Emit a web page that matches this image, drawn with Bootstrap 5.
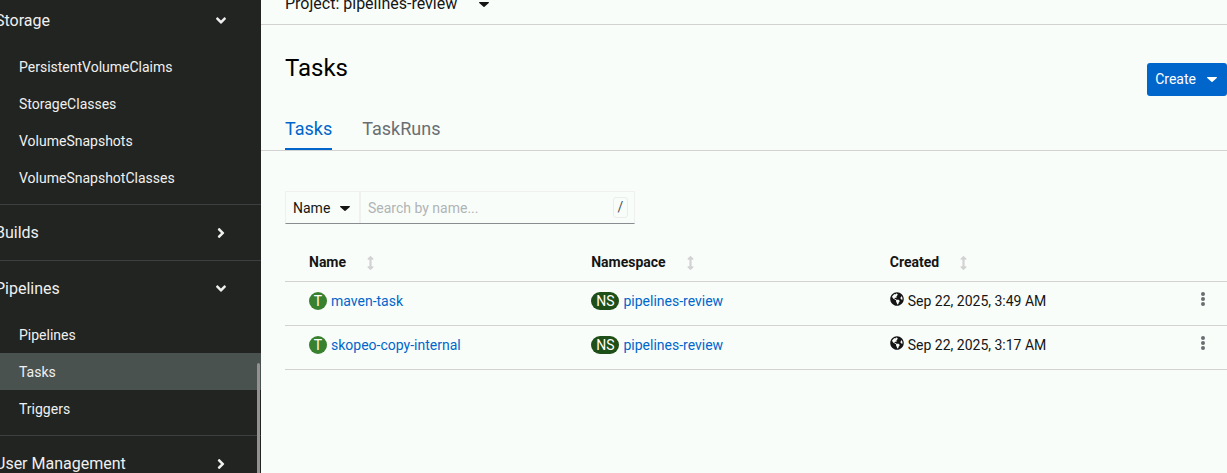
<!DOCTYPE html>
<html lang="en">
<head>
<meta charset="utf-8">
<meta name="viewport" content="width=device-width, initial-scale=1">
<title>Tasks</title>
<link href="https://cdn.jsdelivr.net/npm/bootstrap@5.3.0/dist/css/bootstrap.min.css" rel="stylesheet">
<style>
  body { font-family: Roboto, "Liberation Sans", sans-serif; font-size: 14px; line-height: 21px; color: #151515; background: #f9fdf9; }
  a { text-decoration: none; color: #06c; }
  .ico { fill: currentColor; display: block; }

  .side { width: 290px; margin-left: -29px; background: #212421; color: #f0f0f0; }
  .side-list { margin-top: -7px; }
  .side-group + .side-group { border-top: 1px solid #3c3f42; }
  .side-toggle { height: 55px; padding: 0 32px 0 24px; font-size: 16px; color: inherit; background: none; border: 0; }
  .side-sub { padding-bottom: 8px; }
  .side-link { display: block; padding: 9px 16px 7px 48px; color: inherit; }
  .side-link.active { background: #4a5250; }
  .side-thumb { right: 1px; bottom: 0; width: 3px; height: 110px; background: #949190; border-radius: 2px 2px 0 0; }

  .project-bar { margin-top: -8px; padding: 0 24px 8px; border-bottom: 1px solid #d2d2d2; }
  .project-btn { font-size: 16px; line-height: 24px; color: inherit; background: none; border: 0; gap: 22px; }
  .page-title { font-size: 24px; line-height: 32px; font-weight: 400; color: #000; }
  .head-row { padding: 27px 0 0 24px; }
  .create-btn { height: 33px; margin-top: 11px; padding: 0 10px 0 8px; gap: 11px; font-size: 14px; line-height: 21px; color: #fff; background: #06c; border: 0; border-radius: 3px; }
  .page-tabs { padding: 11px 24px 0; gap: 30px; border-bottom: 1px solid #d2d2d2; }
  .page-tab { padding: 8px 0 6px; font-size: 18px; line-height: 27px; color: #6a6e73; border-bottom: 2px solid transparent; }
  .page-tab.active { color: #06c; border-color: #06c; }

  .list-area { padding: 40px 0 0 24px; }
  .filter { width: 350px; height: 33px; border: 1px solid #f0f0f0; border-bottom-color: #8a8d90; }
  .filter-kind { width: 75px; padding: 2px 9px 0 7px; color: inherit; background: none; border: 0; border-right: 2px solid #f0f0f0; }
  .filter-text { min-width: 0; padding: 2px 7px 0; color: #151515; background: none; border: 0; outline: 0; }
  .filter-text::placeholder { color: #b0b4b6; opacity: 1; }
  .key-hint { width: 15px; height: 21px; margin-right: 6px; line-height: 19px; color: #4f5255; border: 1px solid #ececec; border-radius: 3px; }

  .tasks { margin-top: 21px; table-layout: fixed; }
  .tasks tr { border-bottom: 1px solid #d2d2d2; }
  .tasks th { height: 36px; padding: 0; font-weight: 700; }
  .tasks td { height: 44px; padding: 0 0 4px; }
  .tasks th:first-child, .tasks td:first-child { padding-left: 24px; }
  .col-first { width: 32.5%; }
  .col-second { width: 31.7%; }
  .col-menu { width: 47px; }
  .sort-btn { padding: 0; gap: 21px; font-weight: inherit; color: inherit; background: none; border: 0; }
  .sort-btn .ico { color: #d2d2d2; }
  .kind { min-width: 18px; height: 18px; padding: 0 4px; line-height: 18px; color: #fff; background: #38812f; border-radius: 9px; }
  .kind-ns { padding: 0 5px; background: #1e4f18; }
  .menu-btn { padding: 0 21px; color: #6a6e73; background: none; border: 0; }
</style>
</head>
<body class="overflow-hidden">
<svg class="d-none" aria-hidden="true">
  <symbol id="right" viewBox="-128 0 512 512"><path d="M224.3 273l-136 136c-9.4 9.4-24.6 9.4-33.9 0l-22.6-22.6c-9.4-9.4-9.4-24.6 0-33.9l96.4-96.4-96.4-96.4c-9.4-9.4-9.4-24.6 0-33.9L54.3 103c9.4-9.4 24.6-9.4 33.9 0l136 136c9.5 9.4 9.5 24.6.1 34z"/></symbol>
  <symbol id="down" viewBox="0 0 512 512"><path transform="translate(512 112) rotate(90)" d="M224.3 273l-136 136c-9.4 9.4-24.6 9.4-33.9 0l-22.6-22.6c-9.4-9.4-9.4-24.6 0-33.900l96.4-96.4-96.4-96.4c-9.4-9.4-9.4-24.6 0-33.9L54.3 103c9.4-9.4 24.6-9.4 33.9 0l136 136c9.5 9.4 9.5 24.6.1 34z"/></symbol>
  <symbol id="caret" viewBox="0 0 10 5"><path d="M.6 0h8.8c.5 0 .8.6.4 1L5.5 4.8a.7.7 0 0 1-1 0L.2 1C-.2.6.1 0 .6 0z"/></symbol>
  <symbol id="sort" viewBox="0 0 256 512"><path d="M214.059 377.941H168V134.059h46.059c21.382 0 32.09-25.851 16.971-40.971L144.971 7.029c-9.373-9.373-24.568-9.373-33.941 0L24.971 93.088c-15.119 15.119-4.411 40.971 16.971 40.971H88v243.882H41.941c-21.382 0-32.09 25.851-16.971 40.971l86.059 86.059c9.373 9.373 24.568 9.373 33.941 0l86.059-86.059c15.12-15.119 4.412-40.971-16.97-40.971z"/></symbol>
  <symbol id="globe" viewBox="0 0 496 512"><path fill-rule="evenodd" d="M248 8C111.03 8 0 119.03 0 256s111.03 248 248 248 248-111.03 248-248S384.97 8 248 8zm82.29 357.6c-3.9 3.88-7.99 7.95-11.31 11.28-2.99 3-5.1 6.7-6.17 10.71-1.51 5.66-2.73 11.38-4.77 16.87l-17.39 46.85c-13.76 3-28 4.69-42.65 4.69v-27.38c1.69-12.62-7.64-36.26-22.63-51.25-6-6-9.37-14.14-9.37-22.63v-32.01c0-11.64-6.27-22.34-16.46-27.97-14.37-7.95-34.81-19.06-48.81-26.11-11.48-5.78-22.1-13.14-31.65-21.75l-.8-.72a114.792 114.792 0 0 1-18.06-20.74c-9.38-13.77-24.66-36.42-34.59-51.14 20.47-45.5 57.36-82.04 103.2-101.89l24.01 12.01C203.48 89.74 216 82.01 216 70.11v-11.3c7.99-1.29 16.12-2.11 24.39-2.42l28.3 28.3c6.25 6.25 6.25 16.38 0 22.63L264 112l-10.34 10.34c-3.12 3.12-3.12 8.19 0 11.31l4.69 4.69c3.12 3.12 3.12 8.19 0 11.31l-8 8a8.008 8.008 0 0 1-5.66 2.34h-8.99c-2.08 0-4.08.81-5.58 2.27l-9.92 9.65a8.008 8.008 0 0 0-1.58 9.31l15.59 31.19c2.66 5.32-1.21 11.58-7.15 11.58h-5.64c-1.93 0-3.79-.7-5.24-1.96l-9.28-8.06a16.017 16.017 0 0 0-15.55-3.1l-31.17 10.39a11.95 11.95 0 0 0-8.17 11.34c0 4.53 2.56 8.66 6.61 10.69l11.08 5.54c9.41 4.71 19.79 7.16 30.31 7.16s22.59 27.29 32 32h66.75c8.49 0 16.62 3.37 22.63 9.37l13.69 13.69a30.503 30.503 0 0 1 8.93 21.57 46.536 46.536 0 0 1-13.72 32.98zM417 274.25l-5.790-1.450a24.1 24.1 0 0 1-14.150-9.970l-19.670-29.510a24.1 24.1 0 0 1 0-26.620l21.430-32.150c2.540-3.800 6-6.900 10.090-8.940l14.200-7.100C437.860 187.410 448 220.500 448 256c0 8.800-.800 17.400-2 25.900z"/></symbol>
  <symbol id="dots" viewBox="0 0 4 14"><circle cx="2" cy="2" r="2"/><circle cx="2" cy="7" r="2"/><circle cx="2" cy="12" r="2"/></symbol>
</svg>
<div class="d-flex vh-100">
  <aside class="side flex-shrink-0 position-relative overflow-hidden">
    <nav class="side-list" aria-label="Main">
      <div class="side-group">
        <button type="button" class="side-toggle d-flex align-items-center justify-content-between w-100" aria-expanded="true">Storage<svg class="ico" width="16" height="16"><use href="#down"/></svg></button>
        <div class="side-sub">
          <a class="side-link" href="#">PersistentVolumeClaims</a>
          <a class="side-link" href="#">StorageClasses</a>
          <a class="side-link" href="#">VolumeSnapshots</a>
          <a class="side-link" href="#">VolumeSnapshotClasses</a>
        </div>
      </div>
      <div class="side-group">
        <button type="button" class="side-toggle d-flex align-items-center justify-content-between w-100" aria-expanded="false">Builds<svg class="ico" width="16" height="16"><use href="#right"/></svg></button>
      </div>
      <div class="side-group">
        <button type="button" class="side-toggle d-flex align-items-center justify-content-between w-100" aria-expanded="true">Pipelines<svg class="ico" width="16" height="16"><use href="#down"/></svg></button>
        <div class="side-sub">
          <a class="side-link" href="#">Pipelines</a>
          <a class="side-link active" href="#" aria-current="page">Tasks</a>
          <a class="side-link" href="#">Triggers</a>
        </div>
      </div>
      <div class="side-group">
        <button type="button" class="side-toggle d-flex align-items-center justify-content-between w-100" aria-expanded="false">User Management<svg class="ico" width="16" height="16"><use href="#right"/></svg></button>
      </div>
    </nav>
    <div class="side-thumb position-absolute"></div>
  </aside>

  <main class="flex-grow-1 overflow-hidden">
    <div class="project-bar">
      <button type="button" class="project-btn d-flex align-items-center p-0">Project: pipelines-review<svg class="ico" width="10" height="5"><use href="#caret"/></svg></button>
    </div>
    <div class="head-row d-flex justify-content-between align-items-start">
      <h1 class="page-title m-0">Tasks</h1>
      <button type="button" class="create-btn d-flex align-items-center">Create<svg class="ico" width="10" height="5"><use href="#caret"/></svg></button>
    </div>
    <nav class="page-tabs d-flex" aria-label="Views">
      <a class="page-tab active" href="#" aria-current="page">Tasks</a>
      <a class="page-tab" href="#">TaskRuns</a>
    </nav>
    <div class="list-area">
      <div class="filter d-flex align-items-center">
        <button type="button" class="filter-kind d-flex align-items-center justify-content-between h-100">Name<svg class="ico" width="10" height="5"><use href="#caret"/></svg></button>
        <input class="filter-text flex-grow-1" type="text" placeholder="Search by name..." aria-label="Search by name">
        <span class="key-hint text-center">/</span>
      </div>
      <table class="tasks w-100">
        <thead>
          <tr>
            <th class="col-first" scope="col"><button type="button" class="sort-btn d-flex align-items-center">Name<svg class="ico" width="7" height="14"><use href="#sort"/></svg></button></th>
            <th class="col-second" scope="col"><button type="button" class="sort-btn d-flex align-items-center">Namespace<svg class="ico" width="7" height="14"><use href="#sort"/></svg></button></th>
            <th scope="col"><button type="button" class="sort-btn d-flex align-items-center">Created<svg class="ico" width="7" height="14"><use href="#sort"/></svg></button></th>
            <th class="col-menu"></th>
          </tr>
        </thead>
        <tbody>
          <tr>
            <td><div class="d-flex align-items-center gap-1"><span class="kind text-center">T</span><a href="#">maven-task</a></div></td>
            <td><div class="d-flex align-items-center gap-1"><span class="kind kind-ns text-center">NS</span><a href="#">pipelines-review</a></div></td>
            <td><div class="d-flex align-items-center gap-1"><svg class="ico mb-1" width="14" height="14"><use href="#globe"/></svg>Sep 22, 2025, 3:49 AM</div></td>
            <td><button type="button" class="menu-btn" aria-label="Actions"><svg class="ico" width="4" height="14"><use href="#dots"/></svg></button></td>
          </tr>
          <tr>
            <td><div class="d-flex align-items-center gap-1"><span class="kind text-center">T</span><a href="#">skopeo-copy-internal</a></div></td>
            <td><div class="d-flex align-items-center gap-1"><span class="kind kind-ns text-center">NS</span><a href="#">pipelines-review</a></div></td>
            <td><div class="d-flex align-items-center gap-1"><svg class="ico mb-1" width="14" height="14"><use href="#globe"/></svg>Sep 22, 2025, 3:17 AM</div></td>
            <td><button type="button" class="menu-btn" aria-label="Actions"><svg class="ico" width="4" height="14"><use href="#dots"/></svg></button></td>
          </tr>
        </tbody>
      </table>
    </div>
  </main>
</div>
<script src="https://cdn.jsdelivr.net/npm/bootstrap@5.3.0/dist/js/bootstrap.bundle.min.js"></script>
</body>
</html>
